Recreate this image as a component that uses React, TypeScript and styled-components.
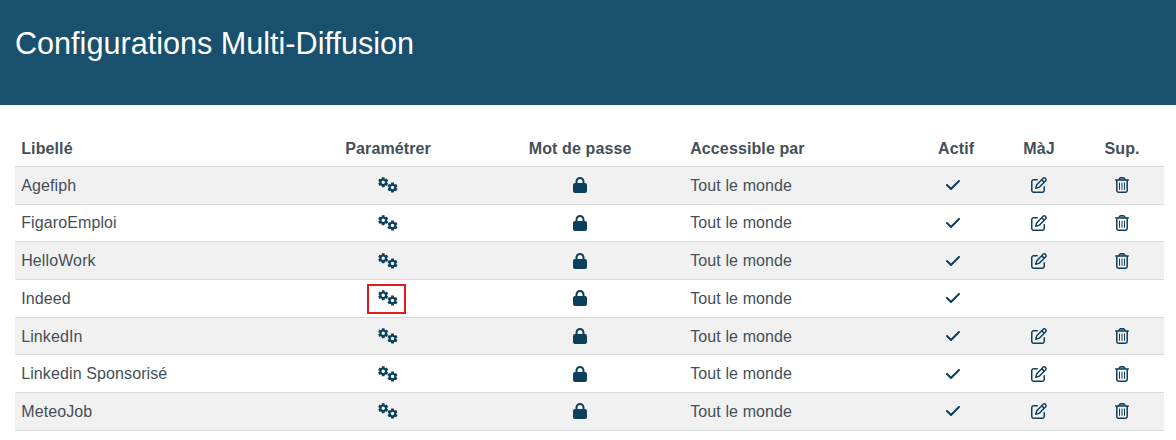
import React from 'react';
import styled, { createGlobalStyle } from 'styled-components';
import { FaLock, FaCheck, FaRegPenToSquare } from 'react-icons/fa6';

const GlobalStyle = createGlobalStyle`
  * { box-sizing: border-box; }
  body {
    margin: 0;
    background: #fff;
    color: #444f5a;
    font: 16px/24px "Liberation Sans", Arial, sans-serif;
    letter-spacing: 0.11px;
  }
`;

const Banner = styled.header`
  height: 105px;
  padding: 25px 15px 0;
  background: #19506e;
`;

const Title = styled.h1`
  margin: 0;
  color: #fff;
  font-size: 30.6px;
  font-weight: 400;
  line-height: 36px;
  letter-spacing: 0;
`;

const Table = styled.div`
  padding: 25px 12px 0 15px;
`;

const Row = styled.div<{ $striped?: boolean; $head?: boolean }>`
  display: grid;
  grid-template-columns: 285px 176px 208px 230px 84px 82px 84px;
  align-items: center;
  height: ${p => (p.$head ? '37px' : '37.7px')};
  padding-top: ${p => (p.$head ? '1px' : '0')};
  border-bottom: 1px solid #d9dbdd;
  background: ${p => (p.$striped ? '#f1f1f1' : '#fff')};
  font-weight: ${p => (p.$head ? 700 : 400)};
`;

const Cell = styled.div<{ $center?: boolean; $nudge?: number }>`
  display: flex;
  justify-content: ${p => (p.$center ? 'center' : 'flex-start')};
  padding: 0.9px ${p => 6 + (p.$nudge ?? 0)}px 0 6.2px;
  white-space: nowrap;
`;

const IconCell = styled(Cell)`
  padding-top: 0;
  padding-bottom: 0.3px;
  color: #0b3f5c;
`;

const Frame = styled.span<{ $marked: boolean }>`
  display: flex;
  align-items: center;
  justify-content: center;
  width: 39px;
  height: 30px;
  margin: 1px 3px 0 0;
  padding: 0 0 1px 2px;
  border: 2px solid ${p => (p.$marked ? '#e3191e' : 'transparent')};
`;

const cog = (cx: number, cy: number) => {
  const points: string[] = [];
  for (let i = 0; i < 6; i++) {
    const base = (i * Math.PI) / 3 + Math.PI / 6;
    [[-0.38, 3.9], [-0.27, 5.2], [0.27, 5.2], [0.38, 3.9]].forEach(([a, r]) => {
      points.push(`${(cx + r * Math.cos(base + a)).toFixed(2)} ${(cy + r * Math.sin(base + a)).toFixed(2)}`);
    });
  }
  return `M${points.join('L')}ZM${cx - 1.75} ${cy}a1.75 1.75 0 1 0 3.5 0a1.75 1.75 0 1 0-3.5 0Z`;
};

const Gears = () => (
  <svg width="20" height="16" viewBox="0 0 20 16" fill="currentColor" fillRule="evenodd">
    <path d={cog(5.2, 5.3)} />
    <path d={cog(14.5, 10.6)} />
  </svg>
);

const Trash = () => (
  <svg width="14" height="16" viewBox="0 0 14 16" fill="none" stroke="currentColor" strokeLinecap="round">
    <path d="M3.7 2.6L4.7 1Q5 .6 5.5 .6h3Q9 .6 9.3 1l1 1.6" fill="currentColor" fillOpacity="0.6" strokeWidth="1.1" />
    <path d="M.7 2.9h12.6M1.8 3v10.6q0 1.6 1.6 1.6h7.2q1.6 0 1.6-1.6V3" strokeWidth="1.5" />
    <path d="M4.5 6v6.4M7 6v6.4M9.5 6v6.4" strokeWidth="1" />
  </svg>
);

const entries = [
  { name: 'Agefiph', editable: true },
  { name: 'FigaroEmploi', editable: true },
  { name: 'HelloWork', editable: true },
  { name: 'Indeed', editable: false, marked: true },
  { name: 'LinkedIn', editable: true },
  { name: 'Linkedin Sponsorisé', editable: true },
  { name: 'MeteoJob', editable: true },
];

export default function App() {
  return (
    <>
      <GlobalStyle />
      <Banner>
        <Title>Configurations Multi-Diffusion</Title>
      </Banner>
      <Table>
        <Row $head>
          <Cell>Libellé</Cell>
          <Cell $center>Paramétrer</Cell>
          <Cell $center>Mot de passe</Cell>
          <Cell>Accessible par</Cell>
          <Cell $center>Actif</Cell>
          <Cell $center>MàJ</Cell>
          <Cell $center>Sup.</Cell>
        </Row>
        {entries.map((entry, i) => (
          <Row key={entry.name} $striped={i % 2 === 0}>
            <Cell>{entry.name}</Cell>
            <IconCell $center>
              <Frame $marked={!!entry.marked}><Gears /></Frame>
            </IconCell>
            <IconCell $center><FaLock size={16} /></IconCell>
            <Cell>Tout le monde</Cell>
            <IconCell $center $nudge={6}><FaCheck size={16} /></IconCell>
            <IconCell $center>{entry.editable && <FaRegPenToSquare size={16} />}</IconCell>
            <IconCell $center $nudge={1}>{entry.editable && <Trash />}</IconCell>
          </Row>
        ))}
      </Table>
    </>
  );
}
